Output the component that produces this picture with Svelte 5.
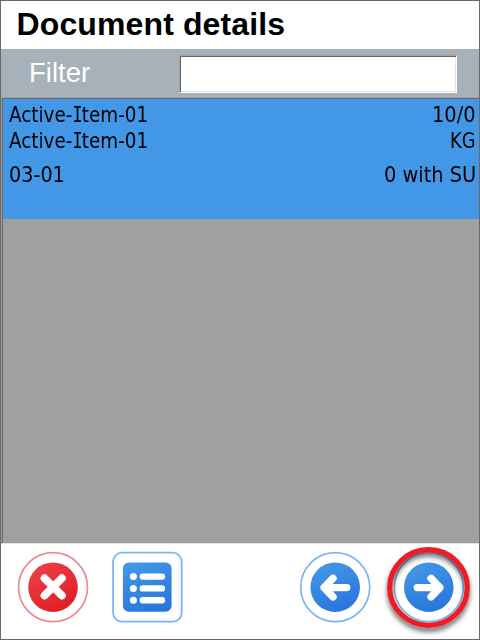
<script>
  const rows = [
    { left: ['Active-', 'I', 'tem-01'], right: '10/0', lw: 139.5, rw: 44 },
    { left: ['Active-', 'I', 'tem-01'], right: 'KG', lw: 139.5, rw: 26 },
    { left: ['03-01', '', ''], right: '0 with SU', lw: 56, rw: 92 }
  ];
  let filter = $state('');

  // Squeezes or stretches a label to a fixed column width.
  function fit(node, width) {
    node.style.transform = `scaleX(${width / node.offsetWidth})`;
  }
</script>

<svelte:head><title>Document details</title></svelte:head>

<main>
  <h1>Document details</h1>
  <div class="filter">
    <label for="filter">Filter</label>
    <input id="filter" bind:value={filter} />
  </div>
  <div class="list">
    <div class="item">
      {#each rows as row, i}
        <div class="row" class:gap={i === 2}>
          <span class="l" use:fit={row.lw}>{row.left[0]}{#if row.left[1]}<span class="serif">{row.left[1]}</span>{/if}{row.left[2]}</span>
          <span class="r" use:fit={row.rw}>{row.right}</span>
        </div>
      {/each}
    </div>
  </div>
  <footer>
    <svg viewBox="0 0 478 95" width="478" height="95">
      <defs>
        <linearGradient id="blue" x1="0.3" y1="0" x2="0.7" y2="1">
          <stop offset="0" stop-color="#4297e6" />
          <stop offset="1" stop-color="#2875dc" />
        </linearGradient>
        <linearGradient id="red" x1="0.2" y1="0" x2="0.8" y2="1">
          <stop offset="0" stop-color="#ee4048" />
          <stop offset="1" stop-color="#df1b22" />
        </linearGradient>
        <filter id="shadow" x="-20%" y="-20%" width="140%" height="150%">
          <feDropShadow dx="0" dy="4" stdDeviation="2.6" flood-color="#000" flood-opacity="0.6" />
        </filter>
      </defs>
      <g transform="translate(52 43.2)">
        <circle r="34.5" fill="none" stroke="#ec8b90" stroke-width="1.7" />
        <circle r="24.8" fill="url(#red)" />
        <path d="M-8.5-9 8.9 8.4M8.9-9-8.5 8.4" stroke="#fff" stroke-width="7.8" stroke-linecap="round" />
      </g>
      <g transform="translate(146.3 43.2)">
        <rect x="-34.2" y="-34.5" width="68.6" height="69" rx="9" fill="none" stroke="#7db6ee" stroke-width="1.8" />
        <rect x="-24.4" y="-24.7" width="48.7" height="49.2" rx="6" fill="url(#blue)" />
        {#each [-10.6, 1.2, 13] as y}
          <circle cx="-13.9" cy={y} r="3.5" fill="#fff" />
          <path d="M-4.5 {y}H14.6" stroke="#fff" stroke-width="6.4" stroke-linecap="round" />
        {/each}
      </g>
      <g transform="translate(334.2 43.2)">
        <circle r="34.5" fill="none" stroke="#7db6ee" stroke-width="1.7" />
        <circle r="24.8" fill="url(#blue)" />
        <path d="M11.5.4H-10.8M-2.2-8.9-11.1.4-2.2 9.7" fill="none" stroke="#fff" stroke-width="7.4" stroke-linecap="round" stroke-linejoin="round" />
      </g>
      <g transform="translate(427.8 43.2)">
        <circle r="34.5" fill="none" stroke="#7db6ee" stroke-width="1.7" />
        <circle r="24.8" fill="url(#blue)" />
        <path d="M-11.5.4H10.8M2.2-8.9 11.1.4 2.2 9.7" fill="none" stroke="#fff" stroke-width="7.4" stroke-linecap="round" stroke-linejoin="round" />
        <ellipse cx="-0.3" cy="0.3" rx="38.8" ry="37.8" fill="none" stroke="#ee1c25" stroke-width="5.2" filter="url(#shadow)" />
      </g>
    </svg>
  </footer>
</main>

<style>
  main {
    box-sizing: border-box;
    width: 480px;
    height: 640px;
    border: 1px solid #696969;
    background: #fff;
    display: flex;
    flex-direction: column;
    overflow: hidden;
    font-family: 'Liberation Sans', Arial, sans-serif;
  }
  h1 {
    margin: 0;
    height: 48px;
    padding-left: 15.5px;
    font-size: 32px;
    letter-spacing: 0.12px;
    line-height: 46px;
    color: #000;
  }
  .filter {
    height: 48px;
    background: #a7b1b9;
    display: flex;
    align-items: flex-start;
  }
  label {
    width: 150px;
    padding-left: 28px;
    font-size: 27.5px;
    line-height: 47px;
    color: #fff;
  }
  input {
    box-sizing: border-box;
    width: 278px;
    height: 38px;
    margin: 6px 0 0;
    padding: 0 6px;
    border: 1px solid;
    border-color: #a0a0a0 #fff #fff #a0a0a0;
    border-radius: 0;
    box-shadow: inset 1px 1px #696969, inset -1px -1px #e3e3e3;
    background: #fff;
    outline: none;
    font: 24px 'Liberation Sans', sans-serif;
  }
  .list {
    box-sizing: border-box;
    height: 447px;
    border-top: 1px solid #a0a0a0;
    border-left: 1px solid #a0a0a0;
    border-bottom: 1px solid #e3e3e3;
    box-shadow: inset 1px 1px #696969;
    padding: 1px 0 0 1px;
    background: #a0a0a0;
  }
  .item {
    box-sizing: border-box;
    height: 120px;
    padding: 3px 3px 0 6px;
    background: #4397e7;
  }
  .row {
    display: flex;
    justify-content: space-between;
    height: 26px;
    font: 20.6px/26px 'DejaVu Sans Condensed', 'DejaVu Sans', sans-serif;
    font-stretch: condensed;
    color: #000;
    white-space: pre;
  }
  .gap {
    margin-top: 8px;
  }
  .l {
    transform-origin: left;
  }
  .r {
    transform-origin: right;
  }
  .serif {
    display: inline-block;
    font-family: 'DejaVu Sans Mono', monospace;
    line-height: 1;
    margin: 0 -1.6px 0 -1.2px;
    transform: scaleX(0.82);
  }
  footer {
    flex: 1;
  }
  svg {
    display: block;
  }
</style>
